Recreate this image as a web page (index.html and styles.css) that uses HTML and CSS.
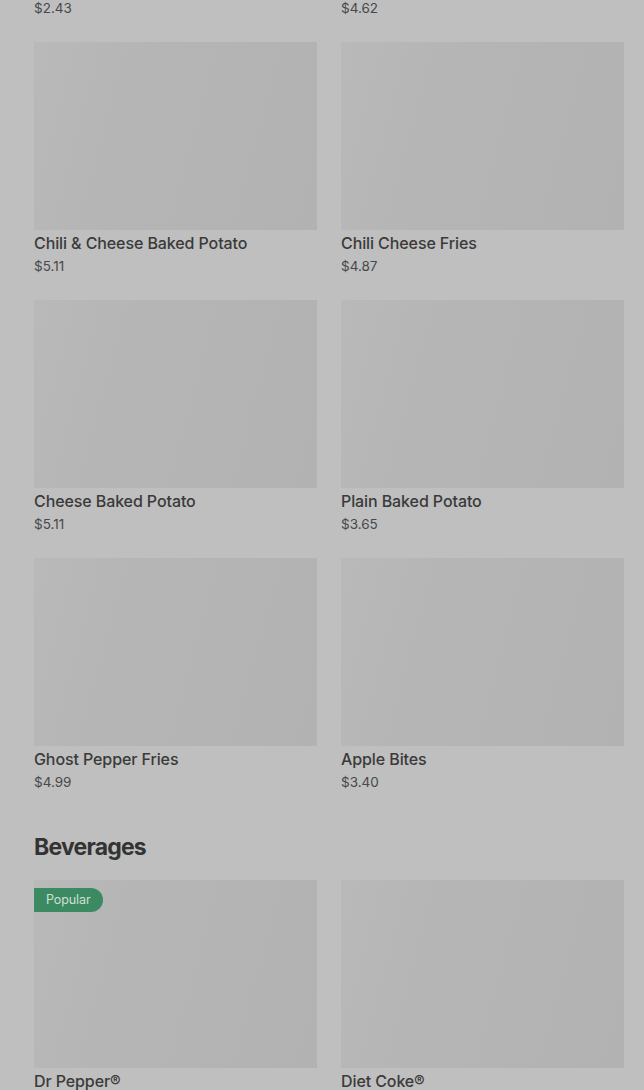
FILE: index.html
```html
<!DOCTYPE html>
<html lang="en">
<head>
<meta charset="utf-8">
<title>Menu</title>
<link rel="stylesheet" href="styles.css">
</head>
<body>
<main class="menu">
  <section class="section section-first">
    <div class="grid">
      <article class="card"><div class="thumb"></div><h3 class="name">Spicy Nuggets (10 pcs)</h3><p class="price">$2.43</p></article>
      <article class="card"><div class="thumb"></div><h3 class="name">Large Seasoned Curly Fries</h3><p class="price">$4.62</p></article>
      <article class="card"><div class="thumb"></div><h3 class="name">Chili &amp; Cheese Baked Potato</h3><p class="price">$5.11</p></article>
      <article class="card"><div class="thumb"></div><h3 class="name">Chili Cheese Fries</h3><p class="price">$4.87</p></article>
      <article class="card"><div class="thumb"></div><h3 class="name">Cheese Baked Potato</h3><p class="price">$5.11</p></article>
      <article class="card"><div class="thumb"></div><h3 class="name">Plain Baked Potato</h3><p class="price">$3.65</p></article>
      <article class="card"><div class="thumb"></div><h3 class="name">Ghost Pepper Fries</h3><p class="price">$4.99</p></article>
      <article class="card"><div class="thumb"></div><h3 class="name">Apple Bites</h3><p class="price">$3.40</p></article>
    </div>
  </section>
  <section class="section">
    <h2 class="section-title">Beverages</h2>
    <div class="grid">
      <article class="card"><div class="thumb"><span class="badge">Popular</span></div><h3 class="name">Dr Pepper®</h3><p class="price">$2.29</p></article>
      <article class="card"><div class="thumb"></div><h3 class="name">Diet Coke®</h3><p class="price">$2.29</p></article>
    </div>
  </section>
</main>
</body>
</html>
```

FILE: styles.css
```css
html, body {
  margin: 0;
  padding: 0;
  background: #bfbfbf;
  overflow: hidden;
}

body {
  font-family: Inter, "Liberation Sans", Arial, sans-serif;
  color: #363636;
}

.menu {
  padding: 0 20px 0 34px;
  height: 1090px;
  overflow: hidden;
}

.section-first {
  margin-top: -216px;
}

.section-title {
  margin: 39px 0 17px;
  font-size: 23px;
  line-height: 32px;
  font-weight: 700;
  letter-spacing: -0.8px;
  color: #333333;
}

.grid {
  display: grid;
  grid-template-columns: 283px 283px;
  column-gap: 24px;
  row-gap: 24px;
}

.card {
  margin: 0;
  display: flex;
  flex-direction: column;
}

.thumb {
  position: relative;
  height: 188px;
  background: linear-gradient(105deg, #b9b9b9 0%, #b5b5b5 35%, #b2b2b2 100%);
}

.badge {
  position: absolute;
  left: 0;
  top: 8px;
  height: 24px;
  padding: 0 12px;
  line-height: 24px;
  font-size: 12.5px;
  letter-spacing: -0.1px;
  color: #d0e0d6;
  background: #3b8a62;
  border-radius: 0 12px 12px 0;
}

.name {
  margin: 2px 0 0;
  font-size: 16px;
  line-height: 22px;
  font-weight: 500;
  letter-spacing: -0.1px;
  color: #3a3a3a;
}

.price {
  margin: 2px 0 0;
  font-size: 13.5px;
  line-height: 20px;
  color: #484848;
}
```
